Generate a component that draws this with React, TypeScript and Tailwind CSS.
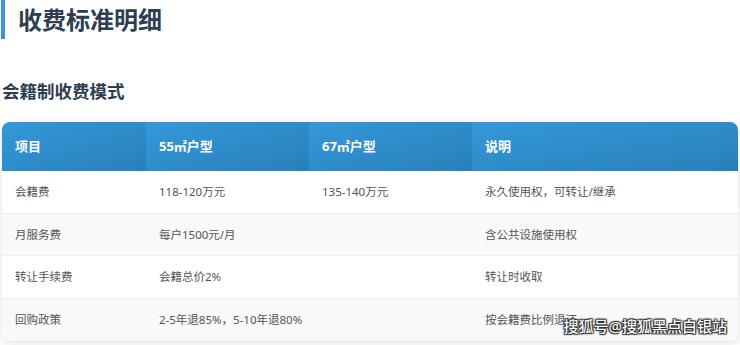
const rows = [
  { item: '会籍费', a: '118-120万元', b: '135-140万元', note: '永久使用权，可转让/继承' },
  { item: '月服务费', a: '每户1500元/月', b: '', note: '含公共设施使用权' },
  { item: '转让手续费', a: '会籍总价2%', b: '', note: '转让时收取' },
  { item: '回购政策', a: '2-5年退85%，5-10年退80%', b: '', note: '按会籍费比例退还' },
]

const headers = ['项目', '55㎡户型', '67㎡户型', '说明']
const widths = ['w-[144px]', 'w-[163px]', 'w-[163px]', 'flex-1']

export default function App() {
  return (
    <div className="relative w-[740px] h-[345px] overflow-hidden bg-white font-['Noto_Sans','Noto_Sans_CJK_SC',sans-serif]">
      <div className="ml-[1px] border-l-[4px] border-[#3498db] pl-[13px] h-[39px] flex items-center">
        <h1 className="text-[24px] font-bold text-[#2c3e50] leading-none">收费标准明细</h1>
      </div>

      <h2 className="mt-[40px] ml-[2px] text-[17.5px] font-bold text-[#2c3e50] leading-[24px]">会籍制收费模式</h2>

      <div className="mt-[19px] mx-[2px] rounded-[8px] overflow-hidden shadow-[0_2px_8px_rgba(0,0,0,0.12)]">
        <div className="flex h-[49px]">
          {headers.map((h, i) => (
            <div
              key={h}
              className={`${widths[i]} bg-linear-to-br from-[#3498db] to-[#2980b9] text-white font-bold text-[13px] flex items-center pl-[13px]`}
            >
              {h}
            </div>
          ))}
        </div>
        {rows.map((r, idx) => (
          <div
            key={r.item}
            className={`flex h-[42.5px] text-[11.5px] text-[#555] border-b border-[#eeeeee] last:border-b-0 ${idx % 2 === 1 ? 'bg-[#f8f9fa]' : 'bg-white'}`}
          >
            <div className="w-[144px] flex items-center pl-[13px]">{r.item}</div>
            <div className="w-[163px] flex items-center pl-[13px]">{r.a}</div>
            <div className="w-[163px] flex items-center pl-[13px]">{r.b}</div>
            <div className="flex-1 flex items-center pl-[13px]">{r.note}</div>
          </div>
        ))}
      </div>

      <div className="absolute right-[13px] bottom-[8px] text-[15px] text-white font-medium [text-shadow:0_0_1px_#000,1px_1px_1px_#333,-1px_-1px_1px_#333,1px_-1px_1px_#333,-1px_1px_1px_#333]">
        搜狐号@搜狐黑点白银站
      </div>
    </div>
  )
}
